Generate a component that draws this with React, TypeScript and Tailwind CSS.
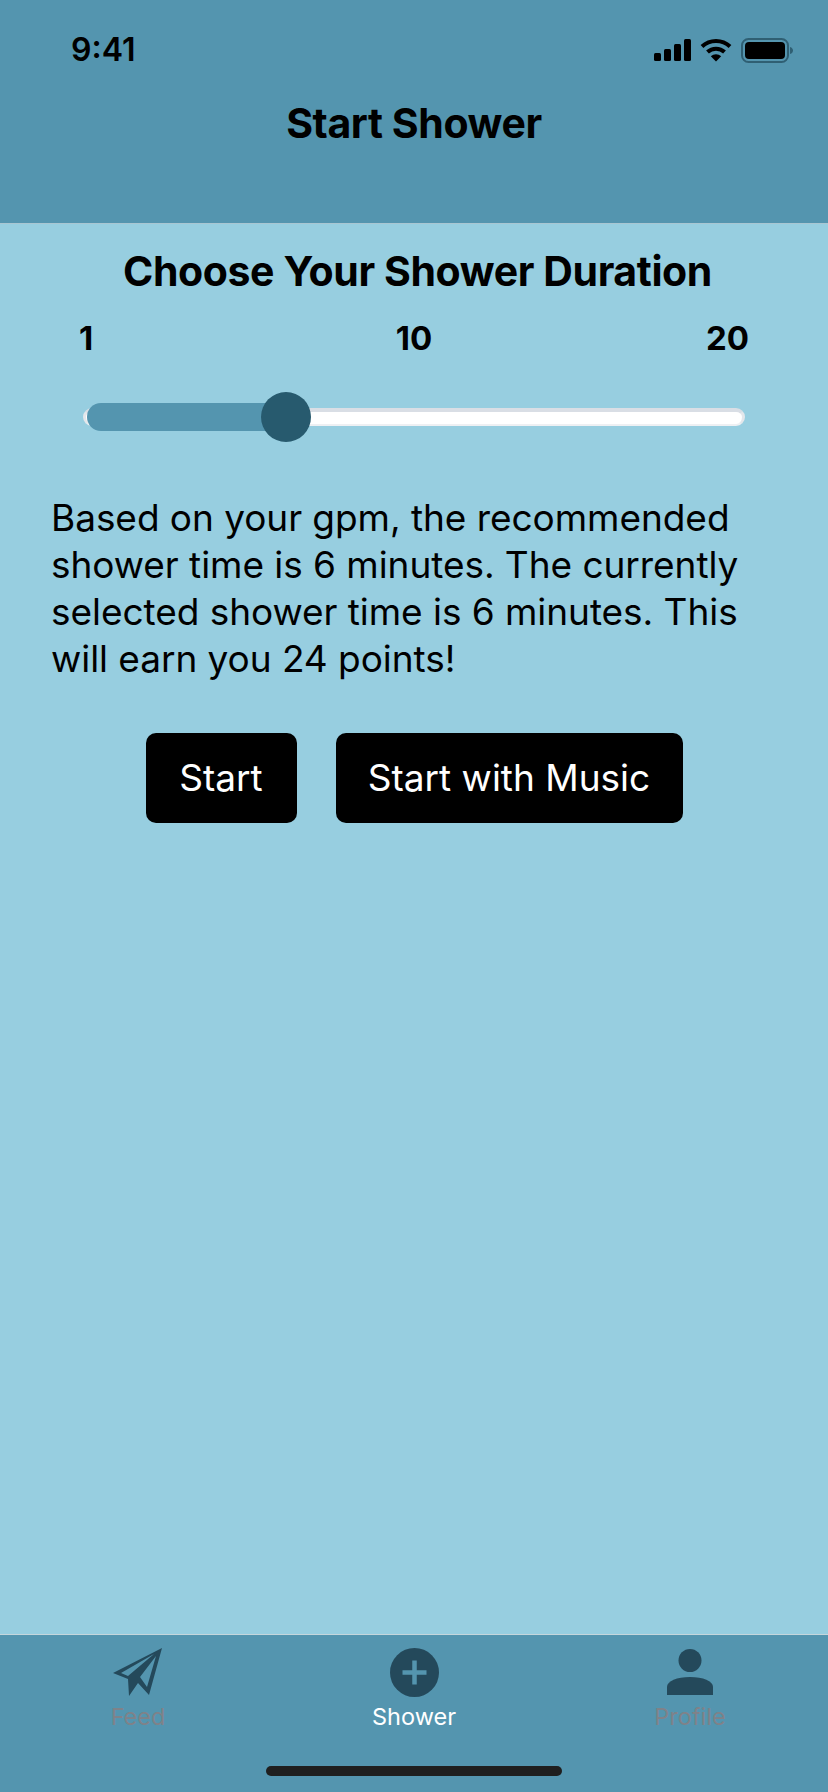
const font = { fontFamily: 'Inter, sans-serif' };

function SignalIcon() {
  return (
    <svg width="37" height="22" viewBox="0 0 37 22" fill="#000">
      <rect x="0" y="14" width="7" height="8" rx="1.5" />
      <rect x="10" y="10" width="7" height="12" rx="1.5" />
      <rect x="20" y="5" width="7" height="17" rx="1.5" />
      <rect x="30" y="0" width="7" height="22" rx="1.5" />
    </svg>
  );
}

function WifiIcon() {
  return (
    <svg width="32" height="24" viewBox="0 0 32 24" fill="none" stroke="#000" strokeWidth="4">
      <path d="M2 8.5C9.8 1 22.2 1 30 8.5" />
      <path d="M7.5 14C12.2 9.5 19.8 9.5 24.5 14" />
      <path d="M16 23.5L10.8 18.3C13.8 15.6 18.2 15.6 21.2 18.3Z" fill="#000" stroke="none" />
    </svg>
  );
}

function BatteryIcon() {
  return (
    <svg width="52" height="25" viewBox="0 0 52 25">
      <rect x="1" y="1" width="46" height="23" rx="6.5" fill="none" stroke="#2f5f73" strokeWidth="2" />
      <rect x="4" y="4" width="40" height="17" rx="4" fill="#000" />
      <path d="M49 9C51 9.5 52 11 52 12.5C52 14 51 15.5 49 16Z" fill="#2f5f73" />
    </svg>
  );
}

function FeedIcon() {
  return (
    <svg width="50" height="50" viewBox="0 0 50 50" fill="#24495b">
      <path
        d="M49 1L0 26L15 32L16 49L25 36L36 48Z M41 7L8 26L15 29Z M43 9L27 30L34 40Z"
        fillRule="evenodd"
      />
    </svg>
  );
}

function ShowerIcon() {
  return (
    <svg width="49" height="49" viewBox="0 0 49 49">
      <circle cx="24.5" cy="24.5" r="24.5" fill="#24495b" />
      <path d="M12.5 24.5H36.5M24.5 12.5V36.5" stroke="#5495af" strokeWidth="4.5" />
    </svg>
  );
}

function ProfileIcon() {
  return (
    <svg width="46" height="46" viewBox="0 0 46 46" fill="#24495b">
      <ellipse cx="23" cy="11.5" rx="11.5" ry="11.5" />
      <path d="M0 46V38C0 32 10 28 23 28C36 28 46 32 46 38V46Z" />
    </svg>
  );
}

function TabItem({ label, active, icon }: { label: string; active?: boolean; icon: React.ReactNode }) {
  return (
    <div className="flex flex-1 flex-col items-center">
      <div className="flex h-[50px] items-center justify-center">{icon}</div>
      <span className={`mt-[6px] text-[23.5px] leading-[28px] ${active ? 'text-white' : 'text-[#7f8289]'}`}>
        {label}
      </span>
    </div>
  );
}

export default function App() {
  return (
    <div className="flex h-[1792px] w-[828px] flex-col overflow-hidden bg-[#97cee0] text-black" style={font}>
      {/* Header */}
      <div className="h-[224px] shrink-0 border-b border-[#a9c6d2] bg-[#5495af]">
        <div className="flex items-center justify-between pl-[71px] pr-[35px] pt-[33px]">
          <span className="text-[32px] font-semibold leading-[34px]">9:41</span>
          <div className="flex items-center gap-[9px]">
            <SignalIcon />
            <WifiIcon />
            <BatteryIcon />
          </div>
        </div>
        <h1 className="mt-[32px] text-center text-[41px] font-bold leading-[48px] tracking-[-0.4px]">Start Shower</h1>
      </div>

      {/* Body */}
      <div className="flex-1">
        <h2 className="mt-[23px] pl-[7px] text-center text-[41px] font-bold leading-[48px] tracking-[-0.4px]">
          Choose Your Shower Duration
        </h2>
        <div className="mt-[23px] grid grid-cols-3 px-[79px] text-[33px] font-bold leading-[40px]">
          <span>1</span>
          <span className="text-center">10</span>
          <span className="text-right">20</span>
        </div>

        {/* Slider */}
        <div className="relative mx-[83px] mt-[34px] h-[50px]">
          <div className="absolute inset-x-0 top-[16px] h-[18px] rounded-full border-x-[3px] border-t-[4px] border-b-[2px] border-x-[#e4e7eb] border-t-[#d9dee5] border-b-[#eef0f3] bg-white" />
          <div className="absolute left-[4px] top-[11px] h-[28px] w-[190px] rounded-l-full bg-[#5495af]" />
          <div className="absolute left-[178px] top-0 h-[50px] w-[50px] rounded-full bg-[#275a6e]" />
        </div>

        <p className="ml-[51px] mr-[40px] mt-[52px] text-[37px] leading-[47px] tracking-[-0.05px]">
          Based on your gpm, the recommended shower time is 6 minutes. The currently selected shower time is 6 minutes.
          This will earn you 24 points!
        </p>

        <div className="mt-[51px] flex justify-center gap-[39px]">
          <button className="h-[90px] w-[151px] rounded-[10px] bg-black text-[37px] text-white">Start</button>
          <button className="h-[90px] w-[347px] rounded-[10px] bg-black text-[37px] text-white">
            Start with Music
          </button>
        </div>
      </div>

      {/* Tab bar */}
      <div className="relative h-[158px] shrink-0 border-t border-[#c5d6dc] bg-[#5495af] pt-[12px]">
        <div className="flex">
          <TabItem label="Feed" icon={<FeedIcon />} />
          <TabItem label="Shower" active icon={<ShowerIcon />} />
          <TabItem label="Profile" icon={<ProfileIcon />} />
        </div>
        <div className="absolute bottom-[16px] left-[266px] h-[10px] w-[296px] rounded-full bg-[#1f1f1f]" />
      </div>
    </div>
  );
}
